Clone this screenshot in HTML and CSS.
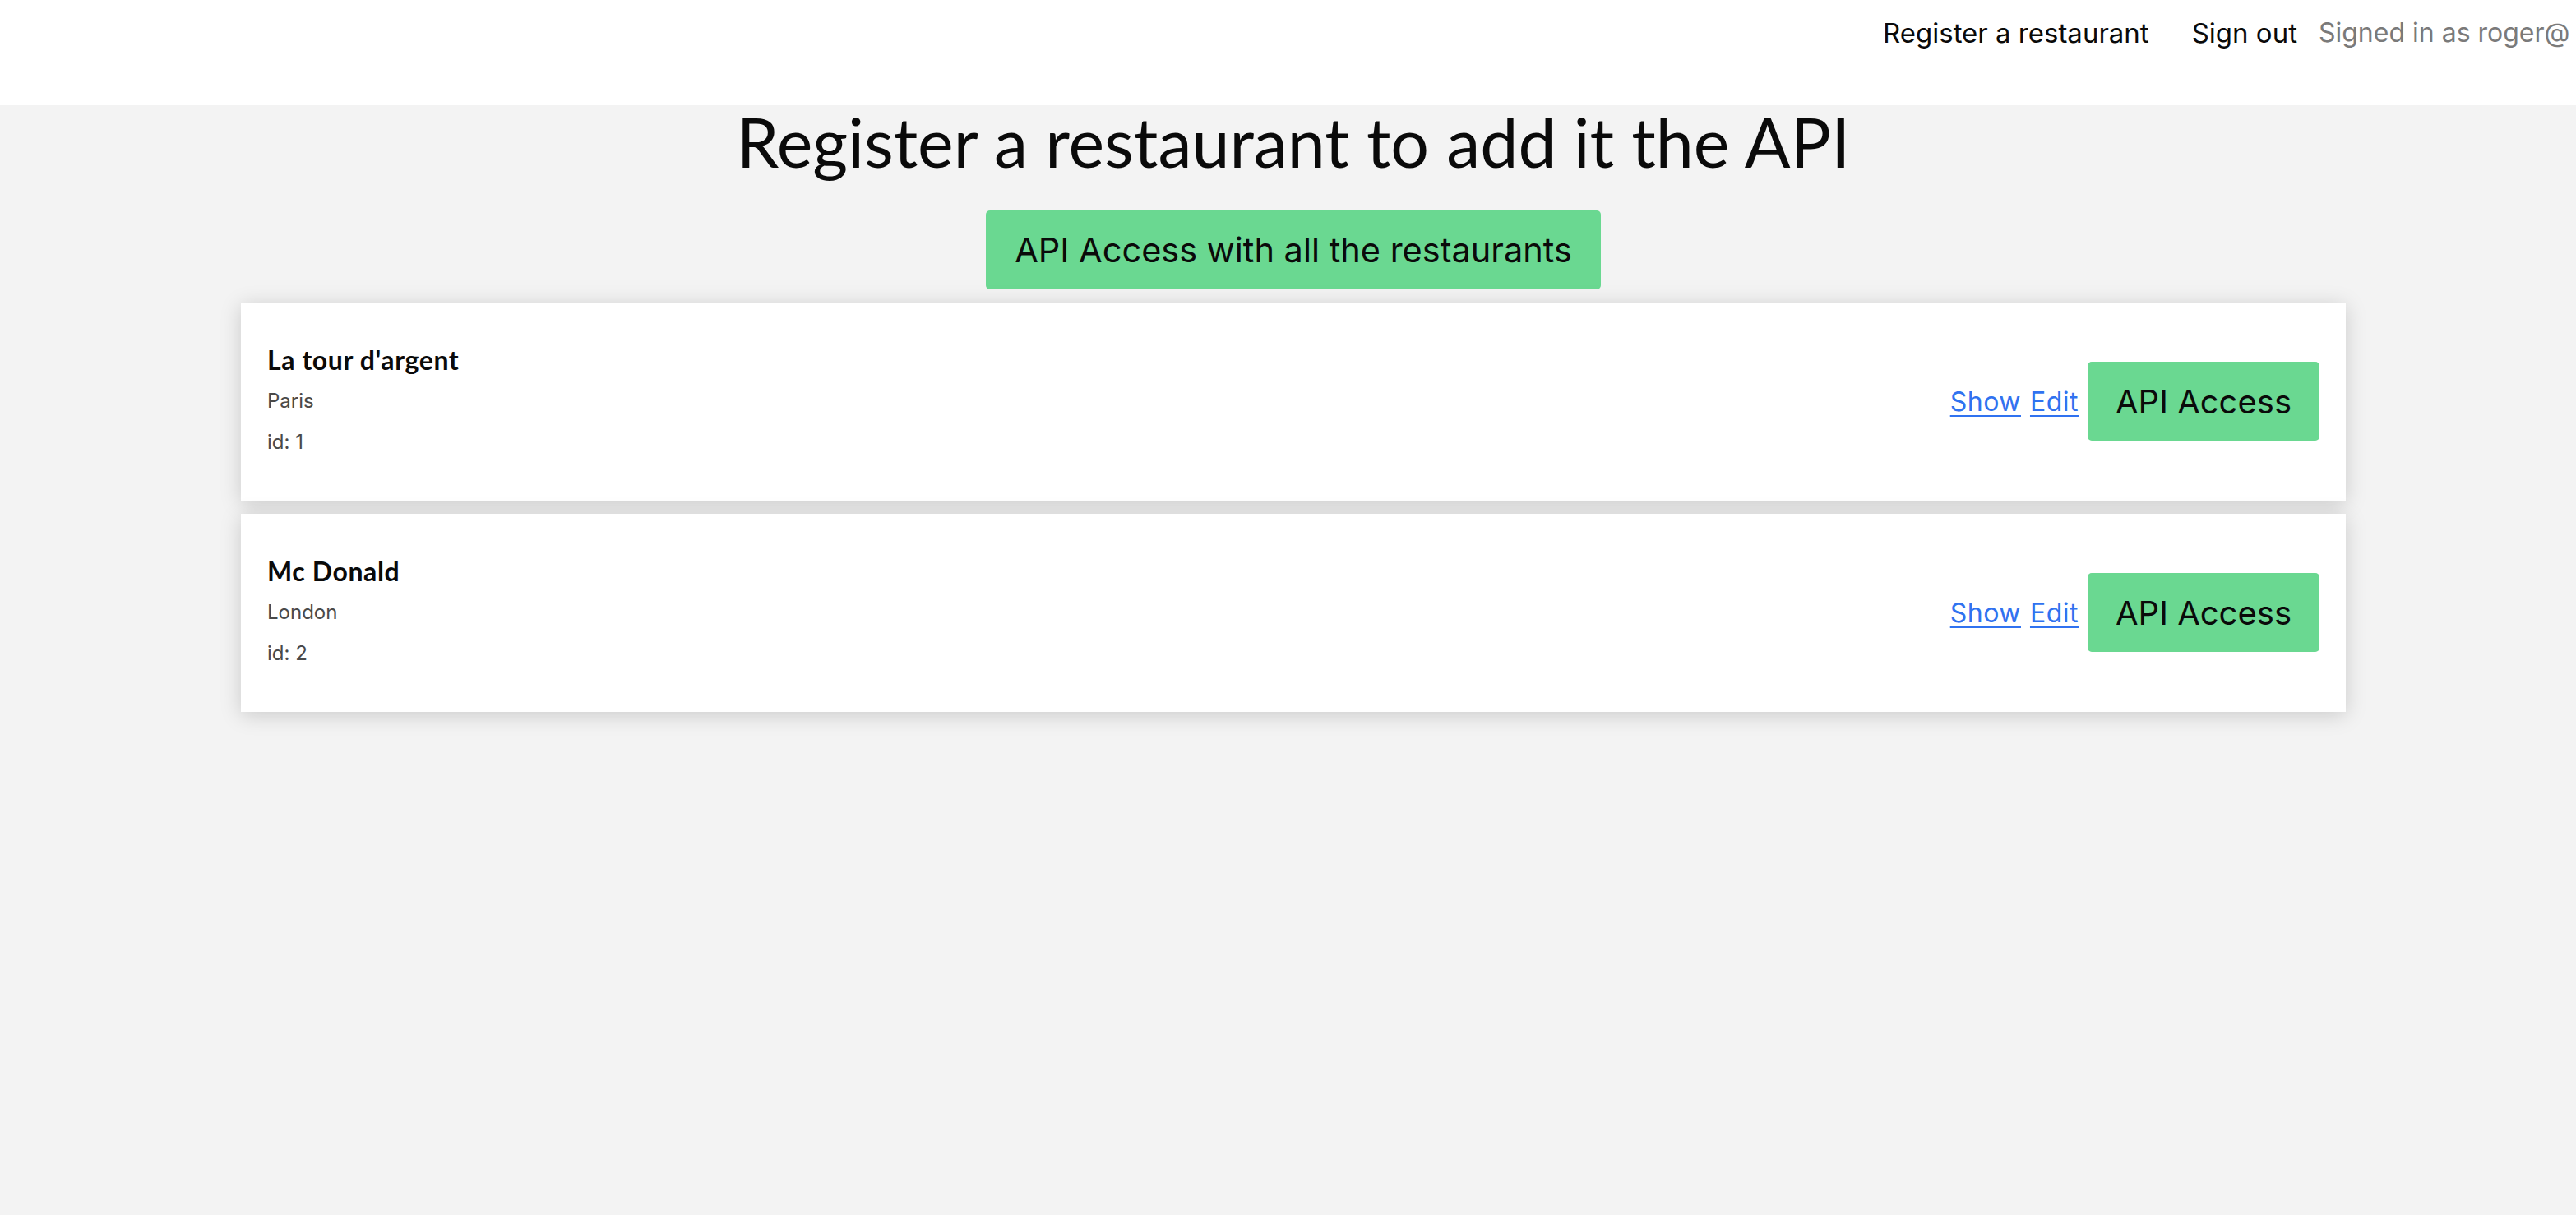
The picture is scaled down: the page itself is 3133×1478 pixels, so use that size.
FILE: index.html
```html
<!DOCTYPE html>
<html lang="en">
<head>
<meta charset="utf-8">
<title>Restaurants</title>
<link rel="stylesheet" href="styles.css">
</head>
<body>
<header class="navbar">
  <nav class="navbar-end">
    <a class="nav-item" href="#">Register a restaurant</a>
    <a class="nav-item" href="#">Sign out</a>
    <span class="nav-user">Signed in as roger@</span>
  </nav>
</header>
<main class="container">
  <h1 class="page-title">Register a restaurant to add it the API</h1>
  <div class="actions">
    <a class="btn btn-wide" href="#">API Access with all the restaurants</a>
  </div>
  <ul class="list">
    <li class="card">
      <div class="info">
        <h2 class="name">La tour d'argent</h2>
        <p class="meta">Paris</p>
        <p class="meta">id: 1</p>
      </div>
      <div class="controls">
        <a class="link" href="#">Show</a>
        <a class="link" href="#">Edit</a>
        <a class="btn" href="#">API Access</a>
      </div>
    </li>
    <li class="card">
      <div class="info">
        <h2 class="name">Mc Donald</h2>
        <p class="meta">London</p>
        <p class="meta">id: 2</p>
      </div>
      <div class="controls">
        <a class="link" href="#">Show</a>
        <a class="link" href="#">Edit</a>
        <a class="btn" href="#">API Access</a>
      </div>
    </li>
  </ul>
</main>
</body>
</html>
```
FILE: styles.css
```css
html, body {
  margin: 0;
  padding: 0;
}

body {
  background: #f3f3f3;
  font-family: Inter, "Liberation Sans", sans-serif;
  color: #0a0a0a;
  min-height: 100vh;
}

a {
  text-decoration: none;
  color: inherit;
}

.navbar {
  background: #ffffff;
  height: 128px;
  overflow: hidden;
  white-space: nowrap;
}

.navbar-end {
  display: flex;
  align-items: flex-start;
  padding-left: 2264px;
}

.nav-item {
  font-size: 33px;
  line-height: 48px;
  padding: 16px 26px;
  color: #0a0a0a;
}

.nav-user {
  font-size: 32px;
  line-height: 48px;
  padding: 16px 0 16px 0;
  color: #7a7a7a;
}

.container {
  width: 2560px;
  margin-left: 293px;
}

.page-title {
  margin: 0;
  text-align: center;
  font-family: Lato, "Noto Sans", sans-serif;
  font-weight: 400;
  font-size: 82.5px;
  line-height: 90px;
  color: #0a0a0a;
}

.actions {
  display: flex;
  justify-content: center;
  margin-top: 38px;
}

.btn {
  display: inline-flex;
  align-items: center;
  height: 96px;
  padding: 0 34px;
  box-sizing: border-box;
  background: #6ad891;
  border-radius: 5px;
  font-size: 40px;
  color: #0a0a0a;
  white-space: nowrap;
}

.btn-wide {
  padding: 0 35px;
  font-size: 41.5px;
}

.list {
  list-style: none;
  margin: 16px 0 0;
  padding: 0;
  display: flex;
  flex-direction: column;
  gap: 16px;
}

.card {
  background: #ffffff;
  display: flex;
  align-items: center;
  justify-content: space-between;
  padding: 45px 32px 46px;
  box-shadow: 0 4px 24px rgba(0, 0, 0, 0.17);
}

.name {
  margin: 0;
  font-family: Lato, "Noto Sans", sans-serif;
  font-weight: 700;
  font-size: 32px;
  letter-spacing: 0.6px;
  line-height: 50px;
  color: #0a0a0a;
}

.meta {
  margin: 0;
  font-size: 24px;
  line-height: 50px;
  color: #4a4a4a;
}

.controls {
  display: flex;
  align-items: center;
  gap: 11px;
}

.link {
  font-size: 32px;
  letter-spacing: 0.5px;
  color: #3072f0;
  text-decoration: underline;
  text-underline-offset: 5px;
  text-decoration-thickness: 2px;
}
```
